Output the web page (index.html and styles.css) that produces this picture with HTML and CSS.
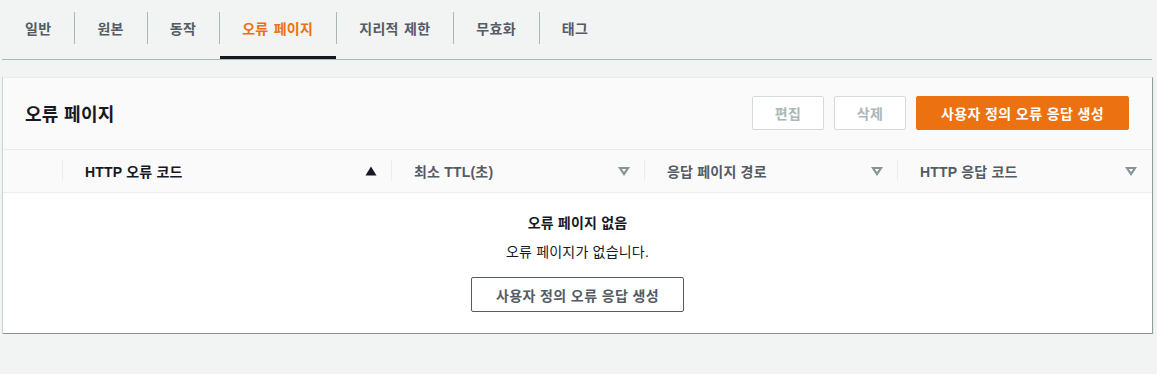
FILE: index.html
```html
<!DOCTYPE html>
<html lang="ko">
<head>
<meta charset="utf-8">
<title>오류 페이지</title>
<link rel="stylesheet" href="styles.css">
</head>
<body>
<div class="page">
  <nav class="tabs">
    <div class="tab">일반</div>
    <div class="tab">원본</div>
    <div class="tab">동작</div>
    <div class="tab active">오류 페이지</div>
    <div class="tab">지리적 제한</div>
    <div class="tab">무효화</div>
    <div class="tab">태그</div>
  </nav>

  <section class="card">
    <header class="card-header">
      <h2 class="card-title">오류 페이지</h2>
      <div class="actions">
        <button class="btn btn-disabled">편집</button>
        <button class="btn btn-disabled">삭제</button>
        <button class="btn btn-primary">사용자 정의 오류 응답 생성</button>
      </div>
    </header>

    <div class="thead">
      <div class="th th-select"></div>
      <div class="th th-code sorted">
        <span>HTTP 오류 코드</span>
        <svg class="sort-icon" width="12" height="10" viewBox="0 0 12 10"><polygon points="6,0.5 11.5,9.5 0.5,9.5" fill="#16191f"/></svg>
      </div>
      <div class="th th-ttl">
        <span>최소 TTL(초)</span>
        <svg class="sort-icon" width="12" height="10" viewBox="0 0 12 10"><polygon points="2,2 10,2 6,8" fill="none" stroke="#879596" stroke-width="2.2" stroke-linejoin="miter"/></svg>
      </div>
      <div class="th th-path">
        <span>응답 페이지 경로</span>
        <svg class="sort-icon" width="12" height="10" viewBox="0 0 12 10"><polygon points="2,2 10,2 6,8" fill="none" stroke="#879596" stroke-width="2.2" stroke-linejoin="miter"/></svg>
      </div>
      <div class="th th-resp">
        <span>HTTP 응답 코드</span>
        <svg class="sort-icon" width="12" height="10" viewBox="0 0 12 10"><polygon points="2,2 10,2 6,8" fill="none" stroke="#879596" stroke-width="2.2" stroke-linejoin="miter"/></svg>
      </div>
    </div>

    <div class="empty">
      <div class="empty-title">오류 페이지 없음</div>
      <div class="empty-text">오류 페이지가 없습니다.</div>
      <button class="btn btn-normal">사용자 정의 오류 응답 생성</button>
    </div>
  </section>
</div>
</body>
</html>
```

FILE: styles.css
```css
* { box-sizing: border-box; }

html, body {
  margin: 0;
  padding: 0;
  background: #f2f3f3;
}

body {
  font-family: "Liberation Sans", "Noto Sans CJK KR", sans-serif;
  font-size: 14px;
  color: #16191f;
}

.page {
  padding: 0 5px 0 3px;
}

/* Tabs */
.tabs {
  display: flex;
  height: 60px;
  border-bottom: 1px solid #aab7b8;
  margin-left: -1px;
}

.tab {
  position: relative;
  display: flex;
  align-items: center;
  padding: 0 23px 3px 23px;
  font-weight: 700;
  font-size: 14px;
  color: #545b64;
  word-spacing: 1px;
  letter-spacing: 0.3px;
  white-space: nowrap;
}

.tab + .tab::before {
  content: "";
  position: absolute;
  left: 0;
  top: 12px;
  height: 32px;
  border-left: 1px solid #aab7b8;
}

.tab.active {
  color: #ec7211;
}

.tab.active::after {
  content: "";
  position: absolute;
  left: 1px;
  right: 0;
  bottom: 0;
  height: 3px;
  background: #16191f;
}

/* Card */
.card {
  margin-top: 17px;
  background: #ffffff;
  border-top: 1px solid #eaeded;
  border-bottom: 1px solid #879596;
  box-shadow: 1px 0 0 0 rgba(0, 28, 36, 0.25), -1px 0 0 0 rgba(0, 28, 36, 0.15), 1px 1px 1px 0 rgba(0, 28, 36, 0.2);
}

.card-header {
  display: flex;
  align-items: center;
  justify-content: space-between;
  background: #fafafa;
  padding: 18px 23px 19px 22px;
}

.card-title {
  margin: 0;
  font-size: 18px;
  font-weight: 700;
  color: #16191f;
  letter-spacing: 0.3px;
}

.actions {
  display: flex;
  gap: 10px;
}

.btn {
  font-family: inherit;
  font-size: 14px;
  font-weight: 700;
  height: 34px;
  padding: 0 20px;
  border-radius: 2px;
  background: #ffffff;
  cursor: pointer;
  white-space: nowrap;
  letter-spacing: 0.4px;
}

.btn-disabled {
  border: 1px solid #d5dbdb;
  color: #aab7b8;
  width: 72px;
  padding: 0;
}

.btn-primary {
  background: #ec7211;
  border: 1px solid #ec7211;
  color: #ffffff;
  width: 213px;
  padding: 0;
}

.btn-normal {
  border: 1px solid #545b64;
  color: #545b64;
  width: 213px;
  height: 35px;
  padding: 0;
}

/* Table header */
.thead {
  display: flex;
  height: 44px;
  background: #fafafa;
  border-top: 1px solid #eaeded;
  border-bottom: 1px solid #eaeded;
}

.th {
  position: relative;
  display: flex;
  align-items: center;
  justify-content: space-between;
  font-weight: 700;
  color: #545b64;
  padding: 0 14px 0 23px;
  letter-spacing: 0.2px;
}

.th + .th::before {
  content: "";
  position: absolute;
  left: 0;
  top: 10px;
  height: 21px;
  border-left: 1px solid #eaeded;
}

.th.sorted { color: #16191f; }

.th-select { width: 59px; padding: 0; }
.th-code { width: 329px; }
.th-ttl { width: 253px; }
.th-path { width: 253px; }
.th-resp { flex: 1; padding-right: 15px; }

.sort-icon {
  display: block;
  flex: none;
}

/* Empty state */
.empty {
  display: flex;
  flex-direction: column;
  align-items: center;
  padding: 20px 0 21px;
}

.empty-title {
  font-weight: 700;
  line-height: 20px;
  color: #16191f;
  letter-spacing: 0.2px;
}

.empty-text {
  margin-top: 9px;
  line-height: 20px;
  color: #16191f;
  letter-spacing: 0.2px;
}

.empty .btn-normal {
  margin-top: 15px;
}
```
